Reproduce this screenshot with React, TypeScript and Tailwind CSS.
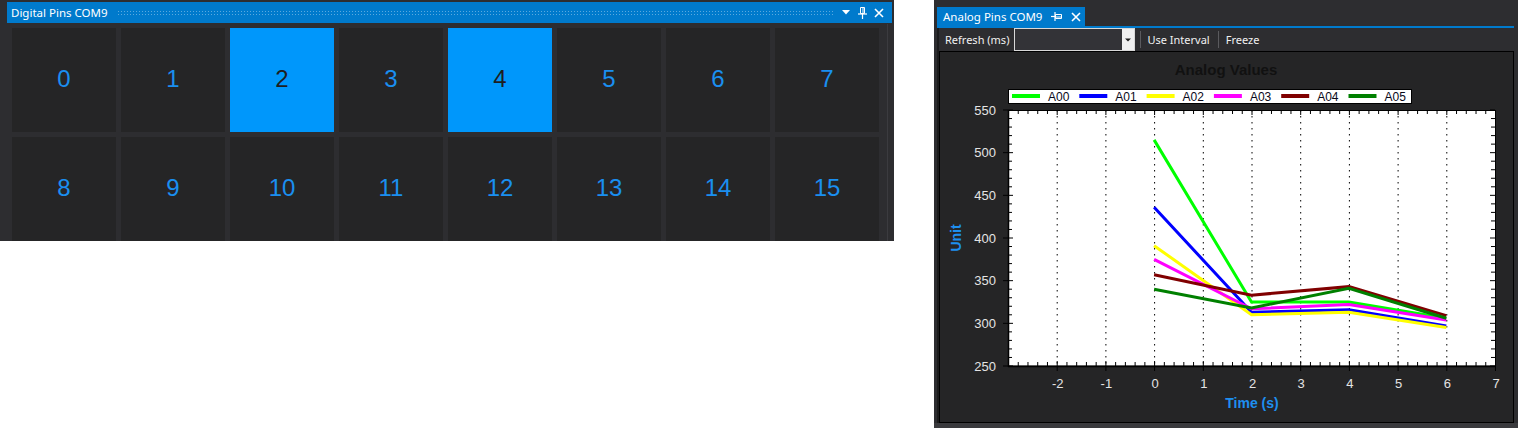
import React from 'react';

const pins = Array.from({ length: 16 }, (_, i) => i);
const activePins = [2, 4];

const series = [
  { name: 'A00', color: '#00ff00', values: [515, 325, 325, 306] },
  { name: 'A01', color: '#0000ff', values: [436, 313, 316, 297] },
  { name: 'A02', color: '#ffff00', values: [391, 310, 313, 295] },
  { name: 'A03', color: '#ff00ff', values: [375, 317, 322, 304] },
  { name: 'A04', color: '#800000', values: [357, 333, 343, 309] },
  { name: 'A05', color: '#008000', values: [340, 318, 341, 306] },
];
const times = [0, 2, 4, 6];

// plot frame in page coordinates
const PL = 1008;
const PR = 1495;
const PT = 110;
const PB = 366;
const xs = (t: number) => PL + ((t + 3) * (PR - PL)) / 10;
const ys = (v: number) => PT + ((550 - v) * (PB - PT)) / 300;

function PinIcon({ className }: { className?: string }) {
  return (
    <svg width="9" height="12" viewBox="0 0 9 12" className={className}>
      <path d="M2.5 0.5h4v6h-4z" fill="none" stroke="white" strokeWidth="1" />
      <path d="M5 1v5.5" stroke="white" strokeWidth="1" />
      <path d="M0 7h9" stroke="white" strokeWidth="1.2" />
      <path d="M4.5 7v5" stroke="white" strokeWidth="1.2" />
    </svg>
  );
}

function TabPinIcon() {
  return (
    <svg width="11" height="9" viewBox="0 0 11 9">
      <path d="M4.5 2.5h6v4h-6z" fill="none" stroke="white" strokeWidth="1" />
      <path d="M5 5h5.5" stroke="white" strokeWidth="1" />
      <path d="M4 0v9" stroke="white" strokeWidth="1.2" />
      <path d="M0 4.5h4" stroke="white" strokeWidth="1.2" />
    </svg>
  );
}

function CloseIcon() {
  return (
    <svg width="10" height="10" viewBox="0 0 10 10">
      <path d="M1 1l8 8M9 1l-8 8" stroke="white" strokeWidth="1.6" />
    </svg>
  );
}

function DigitalPins() {
  return (
    <div className="flex h-[241px] w-[894px] shrink-0 flex-col bg-[#2d2d30] pl-[7px] pt-[2px]">
      <div className="flex h-[21px] w-[885px] items-center bg-[#007acc] pl-[4px] pr-[8px] text-[11.5px] text-white">
        <span className="whitespace-nowrap leading-none">Digital Pins COM9</span>
        <div className="ml-[9px] mr-[8px] h-[5px] flex-1 bg-[radial-gradient(circle,#5aa9df_0.8px,transparent_0.9px)] bg-[length:3px_3px]" />
        <svg width="8" height="5" viewBox="0 0 8 5">
          <path d="M0 0h8L4 4.5z" fill="white" />
        </svg>
        <PinIcon className="ml-[8px]" />
        <span className="ml-[7px] flex">
          <CloseIcon />
        </span>
      </div>
      <div className="flex flex-1">
        <div className="grid grid-cols-[repeat(8,104px)] gap-[5px] pl-[5px] pt-[5px]">
          {pins.map((p) => {
            const on = activePins.includes(p);
            return (
              <div
                key={p}
                className={`flex h-[104px] items-center justify-center pb-[2px] font-['Liberation_Sans',Arial,sans-serif] text-[24px] ${
                  on ? 'bg-[#0097fb] text-[#1e1e1e]' : 'bg-[#252526] text-[#1a8ff0]'
                }`}
              >
                {p}
              </div>
            );
          })}
        </div>
        <div className="ml-[8px] mt-[1px] w-px bg-[#3b3b3f]" />
      </div>
    </div>
  );
}

function Chart() {
  const yMajor = [550, 500, 450, 400, 350, 300, 250];
  const yMinor: number[] = [];
  for (let v = 260; v < 550; v += 10) if (v % 50 !== 0) yMinor.push(v);
  const xMajor = [-2, -1, 0, 1, 2, 3, 4, 5, 6];
  const xMinor: number[] = [];
  for (let k = -15; k < 35; k++) if (k % 5 !== 0) xMinor.push(k / 5);

  return (
    <svg width="573" height="370" className="block">
      <g transform="translate(-940 -52)" fontFamily="'Liberation Sans', Arial, sans-serif">
        <text x="1226" y="75" textAnchor="middle" fontSize="15" fontWeight="bold" fill="#111111">
          Analog Values
        </text>

        <rect x="1008.5" y="89.5" width="403" height="14" fill="white" stroke="black" />
        {series.map((s, i) => {
          const x0 = 1012 + i * 67.3;
          return (
            <g key={s.name}>
              <line x1={x0} y1="96" x2={x0 + 28} y2="96" stroke={s.color} strokeWidth="4" />
              <text x={x0 + 36} y="101" fontSize="12" fill="#0a0a1a">
                {s.name}
              </text>
            </g>
          );
        })}

        <rect x={PL} y={PT} width={PR - PL} height={PB - PT} fill="white" />
        {[...xMajor, 7].map((t) => (
          <line
            key={`g${t}`}
            x1={xs(t) + 0.5}
            y1={PT}
            x2={xs(t) + 0.5}
            y2={PB}
            stroke="black"
            strokeWidth="1"
            strokeDasharray="1.5 4.5"
          />
        ))}

        {yMinor.map((v) => (
          <g key={`ym${v}`}>
            <line x1={PL} y1={ys(v)} x2={PL + 4} y2={ys(v)} stroke="black" />
            <line x1={PR - 4} y1={ys(v)} x2={PR} y2={ys(v)} stroke="black" />
          </g>
        ))}
        {yMajor.map((v) => (
          <g key={`yM${v}`}>
            <line x1={PL - 5} y1={ys(v)} x2={PL + 5} y2={ys(v)} stroke="black" />
            <line x1={PR - 5} y1={ys(v)} x2={PR} y2={ys(v)} stroke="black" />
            <text x="996" y={ys(v) + 4.5} textAnchor="end" fontSize="13" fill="#e4e4e4">
              {v}
            </text>
          </g>
        ))}
        {xMinor.map((t) => (
          <g key={`xm${t}`}>
            <line x1={xs(t) + 0.5} y1={PB - 4} x2={xs(t) + 0.5} y2={PB} stroke="black" />
            <line x1={xs(t) + 0.5} y1={PT} x2={xs(t) + 0.5} y2={PT + 4} stroke="black" />
          </g>
        ))}
        {[...xMajor, 7].map((t) => (
          <g key={`xM${t}`}>
            <line x1={xs(t) + 0.5} y1={PB - 5} x2={xs(t) + 0.5} y2={PB + 5} stroke="black" />
            <line x1={xs(t) + 0.5} y1={PT} x2={xs(t) + 0.5} y2={PT + 5} stroke="black" />
            <text x={xs(t) + 1} y="388" textAnchor="middle" fontSize="13" fill="#e4e4e4">
              {t}
            </text>
          </g>
        ))}
        <rect x={PL + 0.5} y={PT + 0.5} width={PR - PL} height={PB - PT - 0.5} fill="none" stroke="black" />
        <line x1={PL + 0.5} y1={PT} x2={PL + 0.5} y2={PB + 1} stroke="black" strokeWidth="1.5" />
        <line x1={PL} y1={PB + 0.5} x2={PR + 1} y2={PB + 0.5} stroke="black" strokeWidth="1.5" />

        {series.map((s) => (
          <polyline
            key={s.name}
            points={s.values.map((v, i) => `${xs(times[i])},${ys(v)}`).join(' ')}
            fill="none"
            stroke={s.color}
            strokeWidth="3"
          />
        ))}

        <text
          x="961"
          y="238"
          transform="rotate(-90 961 238)"
          textAnchor="middle"
          fontSize="14"
          fontWeight="bold"
          fill="#1e8ff0"
        >
          Unit
        </text>
        <text x="1252" y="408" textAnchor="middle" fontSize="14" fontWeight="bold" fill="#1e8ff0">
          Time (s)
        </text>
      </g>
    </svg>
  );
}

function AnalogPins() {
  return (
    <div className="flex h-[428px] w-[584px] shrink-0 flex-col bg-[#2d2d30] pl-[3px] pr-[4px] text-[11px] text-[#f1f1f1]">
      <div className="flex h-[26px] items-end">
        <div className="flex h-[19px] w-[148px] items-center bg-[#007acc] pl-[6px] text-[11.5px] text-white">
          <span className="whitespace-nowrap leading-none">Analog Pins COM9</span>
          <span className="ml-[9px] flex">
            <TabPinIcon />
          </span>
          <span className="ml-[9px] flex">
            <CloseIcon />
          </span>
        </div>
      </div>
      <div className="h-[2px] bg-[#007acc]" />
      <div className="flex flex-1 flex-col border-l-2 border-[#1b1b1c]">
        <div className="flex h-[23px] items-center pl-[6px]">
          <span className="whitespace-nowrap leading-none">Refresh (ms)</span>
          <div className="ml-[5px] flex h-[23px] w-[121px] border border-[#d8d8d8] bg-[#333337]">
            <div className="flex-1" />
            <div className="flex w-[12px] items-center justify-center bg-[#f0f0f0]">
              <svg width="6" height="4" viewBox="0 0 6 4">
                <path d="M0 0.5h6L3 3.5z" fill="#1e1e1e" />
              </svg>
            </div>
          </div>
          <div className="ml-[5px] h-[17px] w-px bg-[#5a5a5e]" />
          <span className="ml-[6px] whitespace-nowrap leading-none">Use Interval</span>
          <div className="ml-[8px] h-[17px] w-px bg-[#5a5a5e]" />
          <span className="ml-[7px] whitespace-nowrap leading-none">Freeze</span>
        </div>
        <div className="h-[372px] border border-black bg-[#252526]">
          <Chart />
        </div>
      </div>
      <div className="-ml-[3px] -mr-[4px] h-[5px] bg-[#3a3a3d]" />
    </div>
  );
}

export default function App() {
  return (
    <div className="flex h-[428px] w-[1518px] items-start bg-white font-['Noto_Sans','Open_Sans',sans-serif]">
      <DigitalPins />
      <div className="w-[40px] shrink-0" />
      <AnalogPins />
    </div>
  );
}
